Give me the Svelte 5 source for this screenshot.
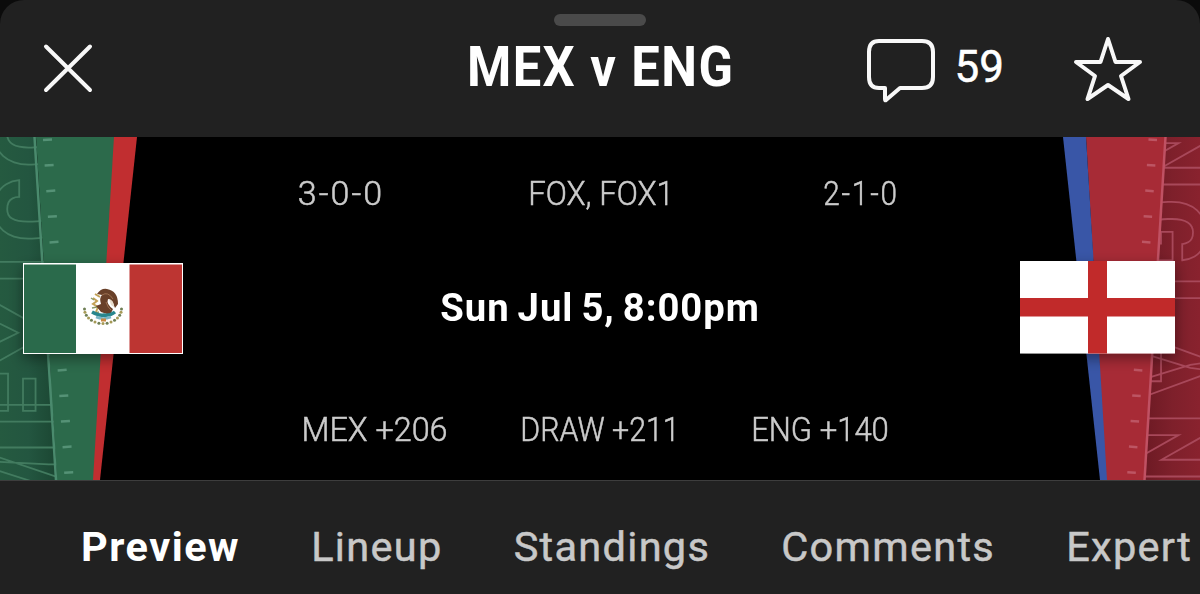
<script>
    const tabs = ['Preview', 'Lineup', 'Standings', 'Comments', 'Expert'];
    let active = $state('Preview');

    const records = [
        { text: '3-0-0', squeeze: 1.03 },
        { text: 'FOX, FOX1', squeeze: 0.945 },
        { text: '2-1-0', squeeze: 0.9 }
    ];
    const odds = [
        { text: 'MEX +206', squeeze: 0.98 },
        { text: 'DRAW +211', squeeze: 0.92 },
        { text: 'ENG +140', squeeze: 0.94 }
    ];

    const ticks = Array.from({ length: 14 }, (_, i) => i);
    const beads = Array.from({ length: 15 }, (_, i) => {
        const a = Math.PI * (i / 14);
        return { x: 80 - Math.cos(a) * 18.5, y: 172 + Math.sin(a) * 14.5 };
    });
</script>

<div class="sheet">
    <header>
        <div class="handle"></div>
        <div class="bar">
            <button class="close" aria-label="Close">
                <svg width="52" height="52" viewBox="0 0 52 52">
                    <path d="M4 4.500L48 48M48 4.500L4 48" />
                </svg>
            </button>
            <h1>MEX v ENG</h1>
            <div class="actions">
                <svg width="70" height="66" viewBox="0 0 70 66">
                    <path d="M13 6H56Q67 6 67 17V42Q67 53 56 53H34L20 65Q19 66 19 64V53H13Q3 53 3 42V17Q3 6 13 6Z" />
                </svg>
                <span class="count">59</span>
                <svg width="70" height="66" viewBox="0 0 70 66">
                    <path d="M35 4L42.500 27H67L48 41L55.500 64L35 50L14.500 64L22 41L3 27H27.500Z" />
                </svg>
            </div>
        </div>
    </header>

    <section class="match">
        <svg class="team" width="200" height="343" viewBox="0 0 200 343">
            <defs>
                <linearGradient id="mexBack" x1="0" x2="1">
                    <stop offset="0" stop-color="#255a40" />
                    <stop offset="0.5" stop-color="#235640" />
                    <stop offset="1" stop-color="#1b4632" />
                </linearGradient>
                <filter id="shadow" x="-20%" y="-20%" width="140%" height="150%">
                    <feDropShadow dx="0" dy="5" stdDeviation="7" flood-opacity="0.4" />
                </filter>
            </defs>
            <path d="M0 0H36L57 343H0Z" fill="url(#mexBack)" />
            <text class="name mex" transform="translate(65 0) rotate(-90)" x="-391 -290 -227 -148 -105 -31">MEXICO</text>
            <path d="M36 0H115L94 343H57Z" fill="#2c6a4b" />
            <path d="M114 0H137L100 343H93Z" fill="#c12e30" />
            <path d="M34.500 0L56 343" stroke="#4a8a6d" stroke-width="2.500" />
            {#each ticks as i}
                <path d="M{43 + i * 1.63} {3 + i * 25.6}l9 -0.600" stroke="#559276" stroke-width="2.500" />
            {/each}
            <g filter="url(#shadow)">
                <rect x="23" y="126" width="160" height="91" fill="#fff" />
                <rect x="24" y="127.500" width="52" height="88.500" fill="#2c6a4b" />
                <rect x="129.500" y="127.500" width="52.500" height="88.500" fill="#bd3432" />
            </g>
            <!-- coat of arms -->
            <g transform="translate(23 0)" fill="none">
                {#each beads as b, i}
                    <circle cx={b.x} cy={b.y} r="1.500" fill={i % 2 ? '#a69a56' : '#6f7f55'} />
                {/each}
                <path d="M70 161l4 3l-4 3l5 3l-2 5M72 157l5 3" stroke="#c3a257" stroke-width="2" />
                <path d="M71 163l-3 -2M74 170l-5 1M76 175l-3 1" stroke="#8a9a68" stroke-width="1.500" />
                <path d="M74 157Q78 151 84 152Q95 154 95 167L92 171Q89 162 85 162Q83 167 90 172L87 178L78 175L73 169L78 167Q76 161 79 158Z" fill="#694029" />
                <path d="M79 158Q85 154 90 162M83 165Q85 171 88 173" stroke="#9d7152" />
                <path d="M86 162Q91 163 91 170L88 168Z" fill="#e9dccb" />
                <path d="M69 175Q76 179 81 178Q87 179 92 175" stroke="#27868d" stroke-width="3.500" />
                <path d="M73 180Q80 183 88 180" stroke="#79b5c5" stroke-width="2.500" />
                <path d="M78 183h5" stroke="#c78843" stroke-width="3" />
            </g>
        </svg>

        <div class="info">
            <div class="records">
                {#each records as item}
                    <span style="--squeeze:{item.squeeze}">{item.text}</span>
                {/each}
            </div>
            <strong>Sun Jul 5, 8:00pm</strong>
            <div class="odds">
                {#each odds as item}
                    <span style="--squeeze:{item.squeeze}">{item.text}</span>
                {/each}
            </div>
        </div>

        <svg class="team" width="200" height="343" viewBox="0 0 200 343">
            <defs>
                <linearGradient id="engBack" x1="0" x2="1">
                    <stop offset="0" stop-color="#6d1a24" />
                    <stop offset="0.500" stop-color="#7e202b" />
                    <stop offset="1" stop-color="#89222e" />
                </linearGradient>
            </defs>
            <path d="M165 0H200V343H145Z" fill="url(#engBack)" />
            <text class="name eng" transform="translate(135 0) rotate(90)" x="-16 61 139 196 276">NGLAN</text>
            <path d="M86 0H165L144 343H106Z" fill="#a72b36" />
            <path d="M63 0H86L107 343H100Z" fill="#3956a7" />
            <path d="M165.500 0L144.500 343" stroke="#c05163" stroke-width="2.500" />
            {#each ticks as i}
                <path d="M{148.500 - i * 1.63} {2.4 + i * 25.6}l8.500 0.600" stroke="#bd5563" stroke-width="2.500" />
            {/each}
            <g filter="url(#shadow)">
                <rect x="20" y="124" width="155" height="92.500" fill="#fff" />
                <path d="M88 124h19v37h68v18.500h-68v37h-19v-37h-68v-18.500h68z" fill="#c1292a" />
            </g>
        </svg>
    </section>

    <nav>
        {#each tabs as tab}
            <button class:active={tab === active} onclick={() => (active = tab)}>{tab}</button>
        {/each}
    </nav>
</div>

<style>
    :global(body){background:#0b0b0b;overflow:hidden}
    .sheet{width:1200px;height:594px;overflow:hidden;border-radius:24px 24px 0 0;background:#212121;color:#fff;font-family:Roboto,"Liberation Sans",sans-serif}
    button{border:0;padding:0;background:none;color:inherit;font:inherit;letter-spacing:inherit}

    header{height:137px;padding:14px 57px 0;box-sizing:border-box}
    .handle{width:92px;height:12px;margin:0 auto;border-radius:6px;background:#4a4a4a}
    .bar{display:grid;grid-template-columns:1fr auto 1fr;align-items:center;height:84px}
    .bar svg{display:block;fill:none;stroke:#f8f8f8;stroke-width:4;stroke-linecap:round;stroke-linejoin:round;overflow:visible}
    .close{justify-self:start;margin-left:-15px}
    h1{margin:0 0 0 2px;font-size:55.5px;line-height:80px;font-weight:700;letter-spacing:1.6px;transform:scaleX(.912);white-space:nowrap}
    .actions{display:flex;align-items:center;justify-content:flex-end}
    .count{margin:0 69px 2px 19px;font-size:44px;-webkit-text-stroke:.5px}

    .match{display:flex;height:343px;background:#000;border-bottom:1px solid #3d3d3d}
    .team{display:block;flex:none}
    .name{font-size:98px;font-weight:900;fill:none;stroke-width:1.8}
    .mex{stroke:#427b5f}
    .eng{stroke:#a8485a}
    .info{flex:1;display:flex;flex-direction:column;align-items:center;justify-content:space-between;padding:37px 0 30px;font-size:33px;line-height:40px;font-weight:300;color:#ccc;white-space:nowrap}
    .info span{transform:scaleX(var(--squeeze));-webkit-text-stroke:.5px #ccc}
    .records,.odds{display:grid;text-align:center}
    .records{grid-template-columns:repeat(3,260px);margin-left:2px}
    .records span:not(:nth-child(2)){letter-spacing:2px}
    .odds{grid-template-columns:225px 226px 214px;margin-right:11px}
    strong{margin-bottom:8px;color:#fff;font-size:39px;font-weight:700;letter-spacing:1px;word-spacing:-2.5px;transform:scaleX(.98)}

    nav{display:flex;gap:71.1px;padding:24px 0 0 81px;font-size:41.5px;line-height:84px;color:#c8c8c8;white-space:nowrap;letter-spacing:1.3px;-webkit-text-stroke:.5px}
    nav .active{font-weight:700;color:#fff;letter-spacing:1.5px;-webkit-text-stroke:0}
</style>
